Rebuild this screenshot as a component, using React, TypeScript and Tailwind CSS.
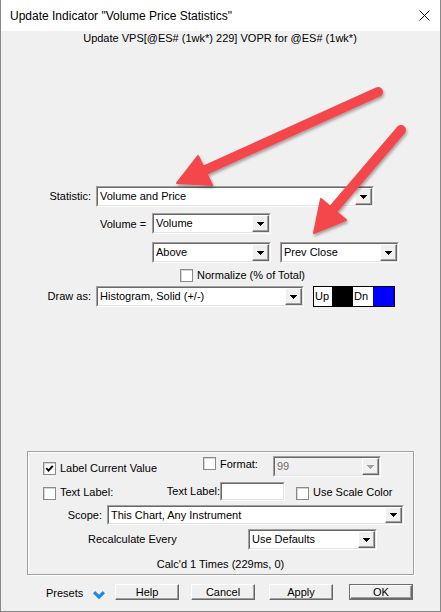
import React from "react";

const FONT = "font-['Liberation_Sans',Arial,sans-serif]";

function Tri({ c = "#000" }: { c?: string }) {
  return (
    <svg width="7" height="4" viewBox="0 0 7 4" shapeRendering="crispEdges">
      <rect x="0" y="0" width="7" height="1" fill={c} />
      <rect x="1" y="1" width="5" height="1" fill={c} />
      <rect x="2" y="2" width="3" height="1" fill={c} />
      <rect x="3" y="3" width="1" height="1" fill={c} />
    </svg>
  );
}

function Combo({ cls, text, disabled }: { cls: string; text: string; disabled?: boolean }) {
  return (
    <div className={`${cls} shrink-0 flex border border-t-[#a0a0a0] border-l-[#a0a0a0] border-b-white border-r-white`}>
      <div
        className={`flex-1 flex items-stretch border border-t-[#696969] border-l-[#696969] border-b-[#e3e3e3] border-r-[#e3e3e3] ${
          disabled ? "bg-[#f0f0f0]" : "bg-white"
        }`}
      >
        <div className={`flex-1 flex items-center pl-[2px] whitespace-nowrap overflow-hidden ${disabled ? "text-[#6d6d6d]" : "text-black"}`}>
          {text}
        </div>
        <div className="w-[17px] flex items-center justify-center bg-[#f0f0f0] border border-t-white border-l-white border-b-[#696969] border-r-[#696969] shadow-[inset_-1px_-1px_0_#a0a0a0]">
          <Tri c={disabled ? "#a0a0a0" : "#000"} />
        </div>
      </div>
    </div>
  );
}

function Check({ checked, cls = "" }: { checked?: boolean; cls?: string }) {
  return (
    <div className={`${cls} w-[13px] h-[13px] shrink-0 bg-white border border-[#8a8a8a] shadow-[inset_1px_1px_0_#d4d4d4] flex items-center justify-center`}>
      {checked && (
        <svg width="9" height="9" viewBox="0 0 9 9">
          <polyline points="1.3,4.2 3.5,6.6 7.8,1.8" fill="none" stroke="#000" strokeWidth="1.9" />
        </svg>
      )}
    </div>
  );
}

function Btn({ label, cls = "", def }: { label: string; cls?: string; def?: boolean }) {
  return (
    <div className={`${cls} w-[64px] h-[16px] shrink-0 ${def ? "border border-[#6d6d6d]" : ""} flex`}>
      <div className="flex-1 flex items-center justify-center bg-[#f0f0f0] border border-t-white border-l-white border-b-[#696969] border-r-[#696969] shadow-[inset_-1px_-1px_0_#a0a0a0] leading-[13px]">
        {label}
      </div>
    </div>
  );
}

function Arrows() {
  return (
    <svg className="absolute inset-0 pointer-events-none" width="441" height="612" viewBox="0 0 441 612">
      <defs>
        <filter id="sh" x="-20%" y="-20%" width="140%" height="140%">
          <feDropShadow dx="1" dy="2" stdDeviation="1.5" floodColor="#000" floodOpacity="0.35" />
        </filter>
      </defs>
      <g filter="url(#sh)" fill="#f4474b" stroke="#f4474b" strokeLinejoin="round">
        <line x1="377" y1="92" x2="200" y2="172" strokeWidth="10" strokeLinecap="round" />
        <polygon points="176,183 197,156 211,185" strokeWidth="2" />
        <line x1="400" y1="130" x2="330" y2="212" strokeWidth="10" strokeLinecap="round" />
        <polygon points="313,233 320,199 345,220" strokeWidth="2" />
      </g>
    </svg>
  );
}

export default function App() {
  return (
    <div className={`${FONT} relative w-[441px] h-[612px] bg-[#f0f0f0] border-l border-r border-b border-[#888888] text-[11px] leading-[13px] text-black overflow-hidden`}>
      {/* Title bar */}
      <div className="h-[31px] bg-white flex items-center justify-between pl-[9px]">
        <div className="text-[12px] leading-[15px] pt-[1px]">Update Indicator "Volume Price Statistics"</div>
        <svg className="mr-[10px]" width="11" height="11" viewBox="0 0 11 11">
          <line x1="0.5" y1="0.5" x2="10.5" y2="10.5" stroke="#000" strokeWidth="1" />
          <line x1="10.5" y1="0.5" x2="0.5" y2="10.5" stroke="#000" strokeWidth="1" />
        </svg>
      </div>

      {/* Subtitle */}
      <div className="h-[14px] leading-[14px] text-center pr-[1px]">Update VPS[@ES# (1wk*) 229] VOPR for @ES# (1wk*)</div>

      {/* Statistic */}
      <div className="mt-[141px] h-[21px] flex items-center">
        <div className="w-[90px] text-right">Statistic:</div>
        <Combo cls="ml-[5px] w-[278px] h-[21px]" text="Volume and Price" />
      </div>

      {/* Volume = */}
      <div className="mt-[6px] h-[21px] flex items-center pl-[99px]">
        <div className="w-[52px] pt-[2px]">Volume =</div>
        <Combo cls="w-[119px] h-[21px]" text="Volume" />
      </div>

      {/* Above / Prev Close */}
      <div className="mt-[8px] h-[21px] flex items-center pl-[151px]">
        <Combo cls="w-[119px] h-[21px]" text="Above" />
        <Combo cls="ml-[9px] w-[119px] h-[21px]" text="Prev Close" />
      </div>

      {/* Normalize */}
      <div className="mt-[6px] h-[13px] flex items-center pl-[179px]">
        <Check />
        <div className="ml-[4px]">Normalize (% of Total)</div>
      </div>

      {/* Draw as */}
      <div className="mt-[4px] h-[21px] flex items-center">
        <div className="w-[90px] text-right">Draw as:</div>
        <Combo cls="ml-[5px] w-[208px] h-[21px]" text="Histogram, Solid (+/-)" />
        <div className="ml-[9px] w-[82px] h-[21px] flex border border-black">
          <div className="w-[18px] bg-white flex items-center pl-[1px]">Up</div>
          <div className="w-[21px] bg-black" />
          <div className="w-[20px] bg-white flex items-center pl-[1px]">Dn</div>
          <div className="flex-1 bg-[#0000ff]" />
        </div>
      </div>

      {/* Group box */}
      <div className="mt-[144px] ml-[26px] w-[387px] h-[124px] border border-[#a0a0a0] shadow-[inset_1px_1px_0_#ffffff,1px_1px_0_#ffffff] flex flex-col">
        {/* Row A */}
        <div className="mt-[4px] h-[21px] flex items-start pl-[15px]">
          <div className="w-[160px] flex items-start">
            <Check checked cls="mt-[6px]" />
            <div className="ml-[4px] mt-[6px]">Label Current Value</div>
          </div>
          <Check cls="mt-[1px]" />
          <div className="ml-[4px] mt-[2px] w-[53px]">Format:</div>
          <Combo cls="w-[108px] h-[21px]" text="99" disabled />
        </div>

        {/* Row B */}
        <div className="mt-[5px] h-[19px] flex items-start pl-[15px]">
          <Check cls="mt-[5px]" />
          <div className="ml-[4px] w-[160px] flex items-start justify-between">
            <div className="mt-[4px]">Text Label:</div>
            <div className="mt-[3px]">Text Label:</div>
          </div>
          <div className="w-[65px] h-[19px] border border-t-[#a0a0a0] border-l-[#a0a0a0] border-b-white border-r-white flex">
            <div className="flex-1 bg-white border border-t-[#696969] border-l-[#696969] border-b-[#e3e3e3] border-r-[#e3e3e3]" />
          </div>
          <Check cls="ml-[11px] mt-[5px]" />
          <div className="ml-[4px] mt-[4px]">Use Scale Color</div>
        </div>

        {/* Row C */}
        <div className="mt-[4px] h-[20px] flex items-center">
          <div className="w-[74px] text-right">Scope:</div>
          <Combo cls="ml-[5px] w-[297px] h-[20px]" text="This Chart, Any Instrument" />
        </div>

        {/* Row D */}
        <div className="mt-[4px] h-[21px] flex items-center pl-[60px]">
          <div className="w-[160px]">Recalculate Every</div>
          <Combo cls="w-[129px] h-[21px]" text="Use Defaults" />
        </div>

        {/* Row E */}
        <div className="mt-[8px] text-center">Calc'd 1 Times (229ms, 0)</div>
      </div>

      {/* Buttons */}
      <div className="mt-[9px] h-[16px] flex items-start pl-[45px]">
        <div className="w-[47px] mt-[3px]">Presets</div>
        <svg className="mt-[7px] shrink-0" width="12" height="9" viewBox="0 0 12 9">
          <polygon points="0,2.2 2.2,0 6,3.8 9.8,0 12,2.2 6,8.2" fill="#1a8ae6" />
        </svg>
        <Btn cls="ml-[10px]" label="Help" />
        <Btn cls="ml-[12px]" label="Cancel" />
        <Btn cls="ml-[14px]" label="Apply" />
        <Btn cls="ml-[16px]" label="OK" def />
      </div>

      <Arrows />
    </div>
  );
}
